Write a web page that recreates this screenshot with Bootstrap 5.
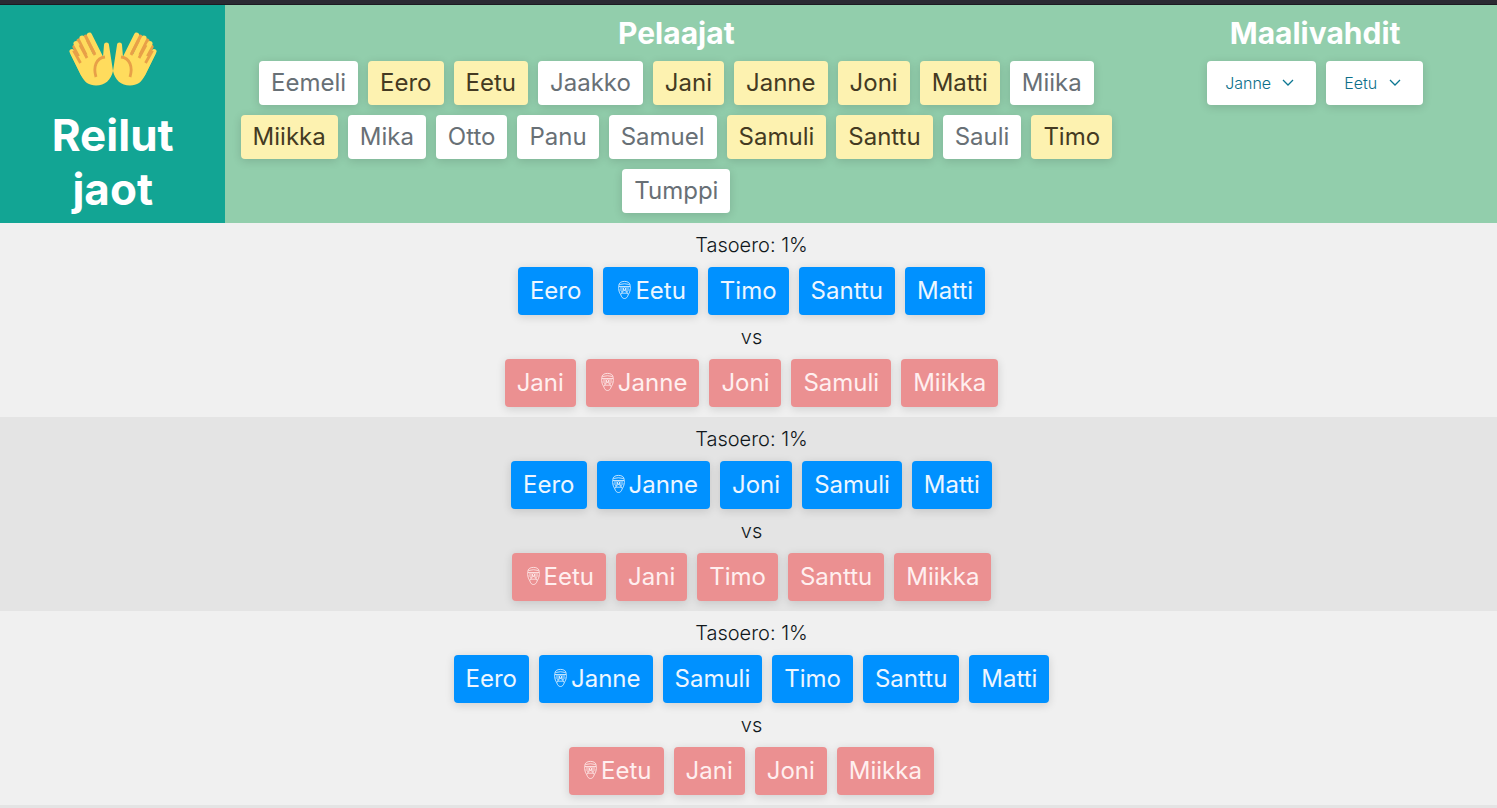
<!DOCTYPE html>
<html lang="fi">
<head>
<meta charset="utf-8">
<meta name="viewport" content="width=device-width, initial-scale=1">
<title>Reilut jaot</title>
<link href="https://cdn.jsdelivr.net/npm/bootstrap@5.3.0/dist/css/bootstrap.min.css" rel="stylesheet">
<style>
  body { font-family: Inter, "Liberation Sans", sans-serif; font-weight: 300; color: #11181c; background: #f0f0f0; overflow-x: hidden; }
  .top-strip { height: 5px; background: #2b2a33; border-bottom: 1px solid #1c1b22; }
  /* the page runs slightly past the window's right edge */
  .shell { margin-right: -6px; }
  .page-head { display: grid; grid-template-columns: 15fr 60fr 25fr; background: #92ceac; color: #fff; }
  .brand { background: #12a594; padding: 27px 30px 7px; gap: 22px; }
  .brand h1 { font-size: 44px; line-height: 54px; font-weight: 700; }
  .page-head h2 { font-size: 30px; line-height: 36px; font-weight: 700; }
  .stack { display: flex; flex-direction: column; align-items: center; gap: 10px; padding: 10px; }
  .chips { display: flex; flex-wrap: wrap; justify-content: center; gap: 10px; }
  .chip { display: flex; align-items: center; height: 48px; padding: 0 12px; border: 0; border-radius: 4px; font-size: 24px; font-weight: 400; line-height: 36px; box-shadow: 0 2px 10px rgba(0, 0, 0, .14); }
  .pick { height: 44px; background: #fff; color: #687076; }
  .pick[aria-pressed="true"] { background: #fdf2b0; color: #443a22; }
  .keeper { height: 44px; padding: 0 18px; border: 0; border-radius: 4px; font-size: 16px; font-weight: 300; color: #0c6f8a; appearance: none; box-shadow: 0 2px 10px rgba(0, 0, 0, .14);
    background: #fff url("data:image/svg+xml,%3Csvg xmlns='http://www.w3.org/2000/svg' width='12' height='8' viewBox='0 0 12 8'%3E%3Cpath d='M1 1l5 5 5-5' fill='none' stroke='%230c7792' stroke-width='1.3'/%3E%3C/svg%3E") no-repeat right 22px center; }
  .keeper-long { width: 109px; }
  .keeper-short { width: 97px; }
  .split { font-size: 20px; line-height: 24px; }
  .split:nth-child(even) { background: #e4e4e4; }
  .team-blue .chip { background: #0091ff; color: #edf6ff; }
  .team-red .chip { background: #eb9091; color: #ffefef; }
  .mask { width: 20px; height: 22px; padding-bottom: 2px; }
</style>
</head>
<body>
<svg class="d-none" xmlns="http://www.w3.org/2000/svg">
  <symbol id="mask" viewBox="0 0 20 20">
    <g fill="none" stroke="currentColor" stroke-width=".8" stroke-linejoin="round">
      <path d="M3.8 6C3.8 2.8 6 1.4 9.500 1.400S15.200 2.800 15.200 6C15.800 9.500 14.800 12.500 13.300 14.500C12.500 17.300 11.300 18.500 9.500 18.500S6.500 17.300 5.700 14.500C4.200 12.500 3.200 9.500 3.800 6Z"/>
      <path d="M4.500 4.500Q9.500 3 14.500 4.500M4 6.500H15M5 8H8.500L9.500 7.300 10.500 8H14M4.500 10H14.500M6 12L9.500 10.500 13 12M7 13.200H12M5.700 14.500L7.500 12M13.300 14.500L11.500 12M8.500 8V10M10.500 8V10"/>
    </g>
  </symbol>
</svg>
<div class="top-strip"></div>
<div class="shell">
  <header class="page-head text-center">
    <div class="brand d-flex flex-column align-items-center">
      <svg width="88" height="54" viewBox="0 0 88 54" aria-hidden="true">
        <defs>
          <g id="hand">
            <g stroke="#e8a048" stroke-width="5" stroke-linecap="round"><path d="M6 15L18 35M10 9L24 32M17 5L30 28"/></g>
            <path d="M3 19.500L14 42M7 11.500L19 33M13 6L25 30M20.500 3L32 26M37.500 13V29" stroke="#ffdc5d" stroke-width="5" stroke-linecap="round"/>
            <path d="M1 21L12 43C15 50 20 53.500 27 53.500C36 53.500 42 48 44 39L40 13H35L34 25C30 25 28 21 28 20L23 23 15 22 7 25Z" fill="#ffdc5d"/>
            <path d="M4.500 18.500L11.500 31M11 13L18 26M18.500 8.500L26 23M36 25C27 26 24 35 27 45" fill="none" stroke="#e8a048" stroke-width="2.800" stroke-linecap="butt"/>
          </g>
        </defs>
        <use href="#hand"/><use href="#hand" transform="matrix(-1 0 0 1 88 0)"/>
      </svg>
      <h1 class="m-0">Reilut jaot</h1>
    </div>
    <section class="stack">
      <h2 class="m-0">Pelaajat</h2>
      <div class="chips">
        <button type="button" class="chip pick" aria-pressed="false">Eemeli</button>
        <button type="button" class="chip pick" aria-pressed="true">Eero</button>
        <button type="button" class="chip pick" aria-pressed="true">Eetu</button>
        <button type="button" class="chip pick" aria-pressed="false">Jaakko</button>
        <button type="button" class="chip pick" aria-pressed="true">Jani</button>
        <button type="button" class="chip pick" aria-pressed="true">Janne</button>
        <button type="button" class="chip pick" aria-pressed="true">Joni</button>
        <button type="button" class="chip pick" aria-pressed="true">Matti</button>
        <button type="button" class="chip pick" aria-pressed="false">Miika</button>
        <button type="button" class="chip pick" aria-pressed="true">Miikka</button>
        <button type="button" class="chip pick" aria-pressed="false">Mika</button>
        <button type="button" class="chip pick" aria-pressed="false">Otto</button>
        <button type="button" class="chip pick" aria-pressed="false">Panu</button>
        <button type="button" class="chip pick" aria-pressed="false">Samuel</button>
        <button type="button" class="chip pick" aria-pressed="true">Samuli</button>
        <button type="button" class="chip pick" aria-pressed="true">Santtu</button>
        <button type="button" class="chip pick" aria-pressed="false">Sauli</button>
        <button type="button" class="chip pick" aria-pressed="true">Timo</button>
        <button type="button" class="chip pick" aria-pressed="false">Tumppi</button>
      </div>
    </section>
    <section class="stack">
      <h2 class="m-0" id="keepers">Maalivahdit</h2>
      <div class="chips">
        <select class="keeper keeper-long" aria-labelledby="keepers"><option selected>Janne</option><option>Eetu</option></select>
        <select class="keeper keeper-short" aria-labelledby="keepers"><option>Janne</option><option selected>Eetu</option></select>
      </div>
    </section>
  </header>
  <main>
    <section class="split stack">
      <div>Tasoero: 1%</div>
      <div class="chips team-blue">
        <div class="chip">Eero</div>
        <div class="chip"><svg class="mask"><use href="#mask"/></svg>Eetu</div>
        <div class="chip">Timo</div>
        <div class="chip">Santtu</div>
        <div class="chip">Matti</div>
      </div>
      <div>vs</div>
      <div class="chips team-red">
        <div class="chip">Jani</div>
        <div class="chip"><svg class="mask"><use href="#mask"/></svg>Janne</div>
        <div class="chip">Joni</div>
        <div class="chip">Samuli</div>
        <div class="chip">Miikka</div>
      </div>
    </section>
    <section class="split stack">
      <div>Tasoero: 1%</div>
      <div class="chips team-blue">
        <div class="chip">Eero</div>
        <div class="chip"><svg class="mask"><use href="#mask"/></svg>Janne</div>
        <div class="chip">Joni</div>
        <div class="chip">Samuli</div>
        <div class="chip">Matti</div>
      </div>
      <div>vs</div>
      <div class="chips team-red">
        <div class="chip"><svg class="mask"><use href="#mask"/></svg>Eetu</div>
        <div class="chip">Jani</div>
        <div class="chip">Timo</div>
        <div class="chip">Santtu</div>
        <div class="chip">Miikka</div>
      </div>
    </section>
    <section class="split stack">
      <div>Tasoero: 1%</div>
      <div class="chips team-blue">
        <div class="chip">Eero</div>
        <div class="chip"><svg class="mask"><use href="#mask"/></svg>Janne</div>
        <div class="chip">Samuli</div>
        <div class="chip">Timo</div>
        <div class="chip">Santtu</div>
        <div class="chip">Matti</div>
      </div>
      <div>vs</div>
      <div class="chips team-red">
        <div class="chip"><svg class="mask"><use href="#mask"/></svg>Eetu</div>
        <div class="chip">Jani</div>
        <div class="chip">Joni</div>
        <div class="chip">Miikka</div>
      </div>
    </section>
    <section class="split stack"></section>
  </main>
</div>
<script src="https://cdn.jsdelivr.net/npm/bootstrap@5.3.0/dist/js/bootstrap.bundle.min.js"></script>
</body>
</html>
